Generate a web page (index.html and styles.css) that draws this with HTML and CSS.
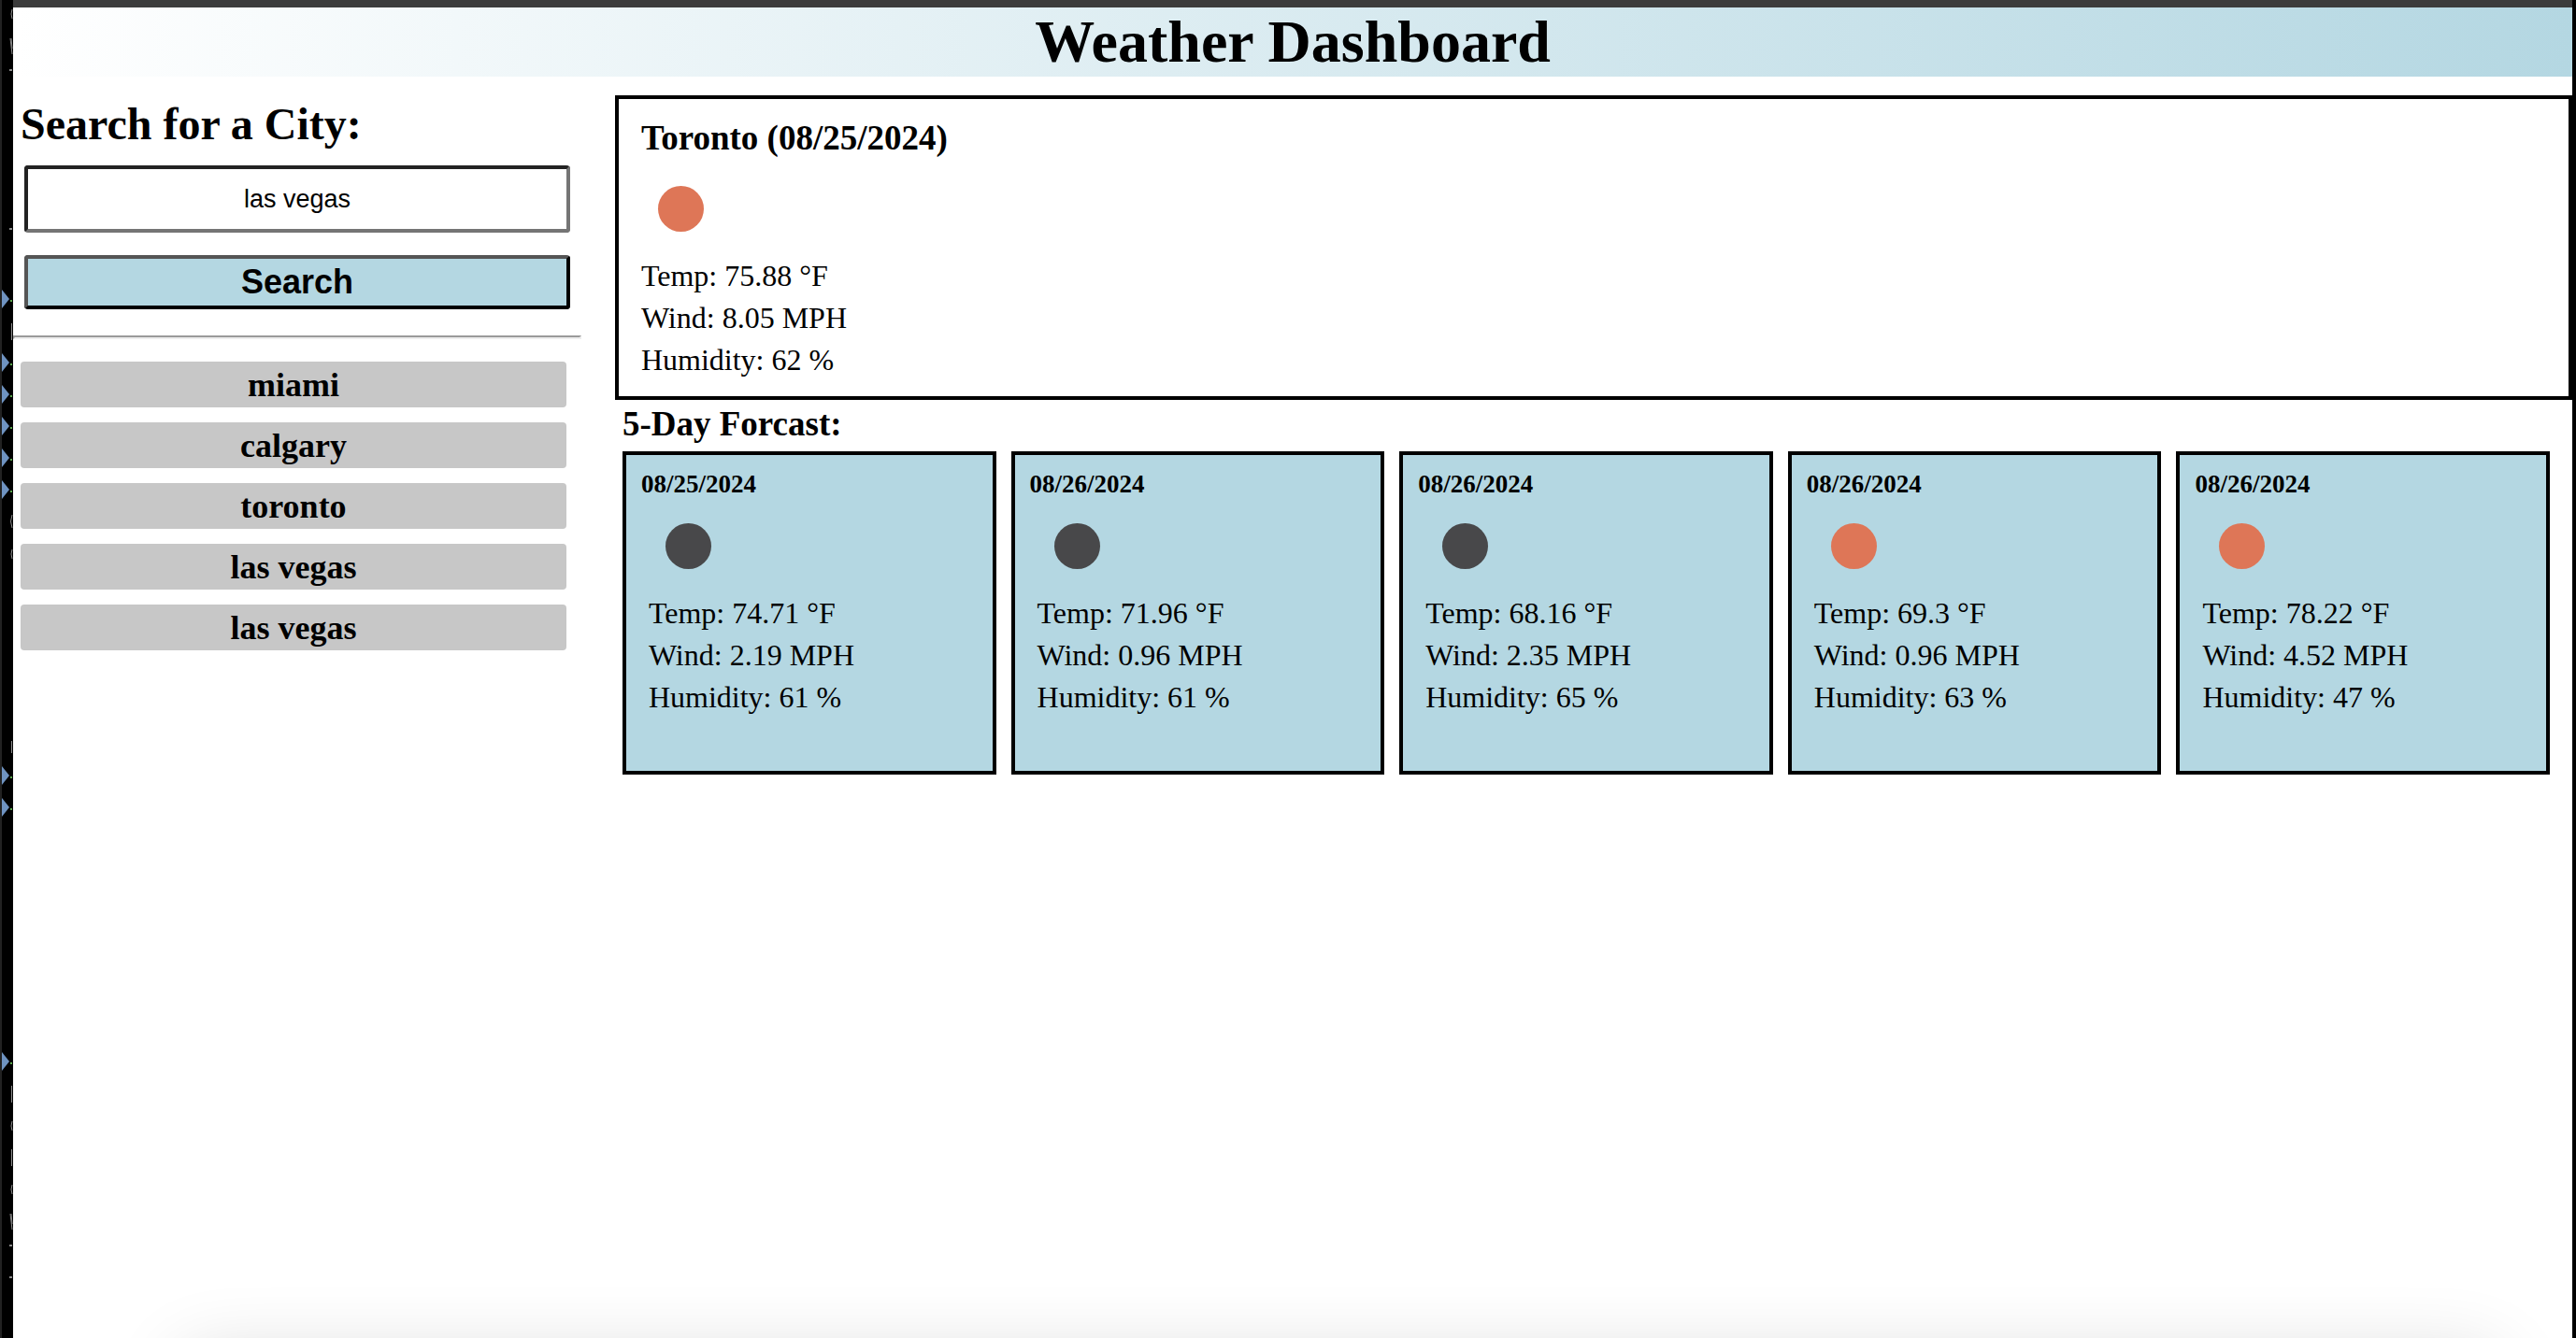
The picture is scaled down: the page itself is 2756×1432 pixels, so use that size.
FILE: index.html
```html
<!DOCTYPE html>
<html lang="en">
<head>
<meta charset="utf-8">
<title>Weather Dashboard</title>
<link rel="stylesheet" href="styles.css">
</head>
<body>
<div class="window">
  <div class="backdrop" aria-hidden="true">
    <svg class="gutter" width="14" height="1432" viewBox="0 0 14 1432">
      <defs><path id="mark" d="M2 -10L10 0L2 10Z" fill="#6f93c1"/><path id="dot" d="M11 1h2v2h-2z" fill="#57a64a"/></defs>
      <rect width="2" height="1432" fill="#222"/>
      <use href="#mark" y="320"/><use href="#dot" y="320"/>
      <use href="#mark" y="388"/><use href="#dot" y="388"/>
      <use href="#mark" y="422"/><use href="#dot" y="422"/>
      <use href="#mark" y="456"/><use href="#dot" y="456"/>
      <use href="#mark" y="490"/><use href="#dot" y="490"/>
      <use href="#mark" y="524"/><use href="#dot" y="524"/>
      <use href="#mark" y="830"/><use href="#dot" y="830"/>
      <use href="#mark" y="864"/><use href="#dot" y="864"/>
      <use href="#mark" y="1136"/><use href="#dot" y="1136"/>
      <g fill="none" stroke="#8a8a8a" stroke-width="1">
        <path d="M13 10Q11 15 13 20M13 551Q10 558 13 565M13 588Q11 593 13 598M13 1200Q11 1205 13 1210M13 1268Q11 1273 13 1278"/>
        <path d="M11 41L13 58M12 41L13 52M11 1299L13 1316M12 1299L13 1310"/>
        <path d="M12.5 346v18M12.5 793v13M12.5 1162v18M12.5 1230v18"/>
        <path d="M10 75h3M10 245h3M10 1333h3M10 1367h3" stroke-width="2"/>
      </g>
    </svg>
  </div>
  <div class="page">
    <header class="header"><h1>Weather Dashboard</h1></header>
    <main class="layout">
      <aside class="sidebar">
        <form class="search">
          <h2><label for="city">Search for a City:</label></h2>
          <input id="city" class="city-input" type="text" value="las vegas">
          <button class="search-button" type="button">Search</button>
        </form>
        <hr class="divider">
        <div class="history">
          <button type="button">miami</button>
          <button type="button">calgary</button>
          <button type="button">toronto</button>
          <button type="button">las vegas</button>
          <button type="button">las vegas</button>
        </div>
      </aside>
      <section class="weather">
        <article class="today">
          <h3>Toronto (08/25/2024)</h3>
          <div class="icon sun"></div>
          <p>Temp: 75.88 °F</p>
          <p>Wind: 8.05 MPH</p>
          <p>Humidity: 62 %</p>
        </article>
        <h3 class="forecast-title">5-Day Forcast:</h3>
        <div class="forecast">
          <article class="card">
            <h4>08/25/2024</h4>
            <div class="icon cloud"></div>
            <p>Temp: 74.71 °F</p>
            <p>Wind: 2.19 MPH</p>
            <p>Humidity: 61 %</p>
          </article>
          <article class="card">
            <h4>08/26/2024</h4>
            <div class="icon cloud"></div>
            <p>Temp: 71.96 °F</p>
            <p>Wind: 0.96 MPH</p>
            <p>Humidity: 61 %</p>
          </article>
          <article class="card">
            <h4>08/26/2024</h4>
            <div class="icon cloud"></div>
            <p>Temp: 68.16 °F</p>
            <p>Wind: 2.35 MPH</p>
            <p>Humidity: 65 %</p>
          </article>
          <article class="card">
            <h4>08/26/2024</h4>
            <div class="icon sun"></div>
            <p>Temp: 69.3 °F</p>
            <p>Wind: 0.96 MPH</p>
            <p>Humidity: 63 %</p>
          </article>
          <article class="card">
            <h4>08/26/2024</h4>
            <div class="icon sun"></div>
            <p>Temp: 78.22 °F</p>
            <p>Wind: 4.52 MPH</p>
            <p>Humidity: 47 %</p>
          </article>
        </div>
      </section>
    </main>
    <div class="bottom-shade"></div>
  </div>
</div>
</body>
</html>
```
FILE: styles.css
```css
* {
  box-sizing: border-box;
  margin: 0;
}

body {
  background: #000;
  color: #000;
  font-family: "Liberation Serif", "Times New Roman", serif;
  font-size: 32px;
  line-height: 45px;
}

.window {
  display: grid;
  grid-template-columns: 14px 1fr;
  min-height: 100vh;
  padding-right: 4px;
}

.backdrop {
  position: relative;
  overflow: hidden;
}

.gutter {
  position: absolute;
  top: 0;
  left: 0;
}

.page {
  position: relative;
  overflow: hidden;
  border-top: 8px solid #3c3c3c;
  background: #fff;
}

.header {
  background: linear-gradient(to right, #fff, #b4d7e2);
  text-align: center;
}

h1 {
  font-size: 64px;
  line-height: 74px;
}

.layout {
  display: grid;
  grid-template-columns: 9fr 31fr;
  gap: 36px;
  align-items: start;
  padding-top: 20px;
}

.search {
  display: flex;
  flex-direction: column;
  padding: 4px 12px 0;
}

h2 {
  margin: 0 0 17px -4px;
  font-size: 48px;
  line-height: 54px;
}

.city-input,
.search-button {
  width: 100%;
  border-width: 4px;
  border-radius: 4px;
  color: #000;
  font-family: "Liberation Sans", Arial, sans-serif;
  text-align: center;
}

.city-input {
  height: 72px;
  border-style: solid;
  border-color: #222 #757575 #757575 #222;
  background: #fff;
  font-size: 27px;
}

.search-button {
  height: 58px;
  margin-top: 24px;
  padding: 0;
  border-style: solid;
  border-color: #555 #000 #000 #555;
  background: #b4d7e2;
  font-size: 36px;
  font-weight: bold;
}

.divider {
  margin-top: 28px;
  border: 2px solid;
  border-color: #9a9a9a #eee #eee #9a9a9a;
}

.history {
  display: flex;
  flex-direction: column;
  gap: 16px;
  padding: 24px 16px 0 8px;
}

.history button {
  height: 49px;
  padding: 0;
  border: 0;
  border-radius: 4px;
  background: #c7c7c7;
  color: #000;
  font: bold 36px "Liberation Serif", "Times New Roman", serif;
}

.today {
  padding: 20px 24px 16px;
  border: 4px solid #000;
}

h3 {
  font-size: 37px;
  line-height: 44px;
}

.icon {
  width: 49px;
  height: 49px;
  margin: 29px 18px 25px;
  border-radius: 50%;
}

.sun {
  background: #de7657;
}

.cloud {
  background: #48484a;
}

.forecast-title {
  margin: 4px 8px 7px;
}

.forecast {
  display: grid;
  grid-template-columns: repeat(5, 1fr);
  gap: 16px;
  padding: 0 24px 0 8px;
}

.card {
  padding: 16px 24px 56px;
  border: 4px solid #000;
  background: #b4d7e2;
}

.card h4 {
  margin: 0 -8px 27px;
  font-size: 27px;
  line-height: 30px;
}

.card .icon {
  margin-top: 27px;
}

.bottom-shade {
  position: absolute;
  right: 80px;
  bottom: -220px;
  left: 180px;
  height: 200px;
  border-radius: 20px;
  box-shadow: 0 0 80px rgba(0, 0, 0, 0.16);
}
```
